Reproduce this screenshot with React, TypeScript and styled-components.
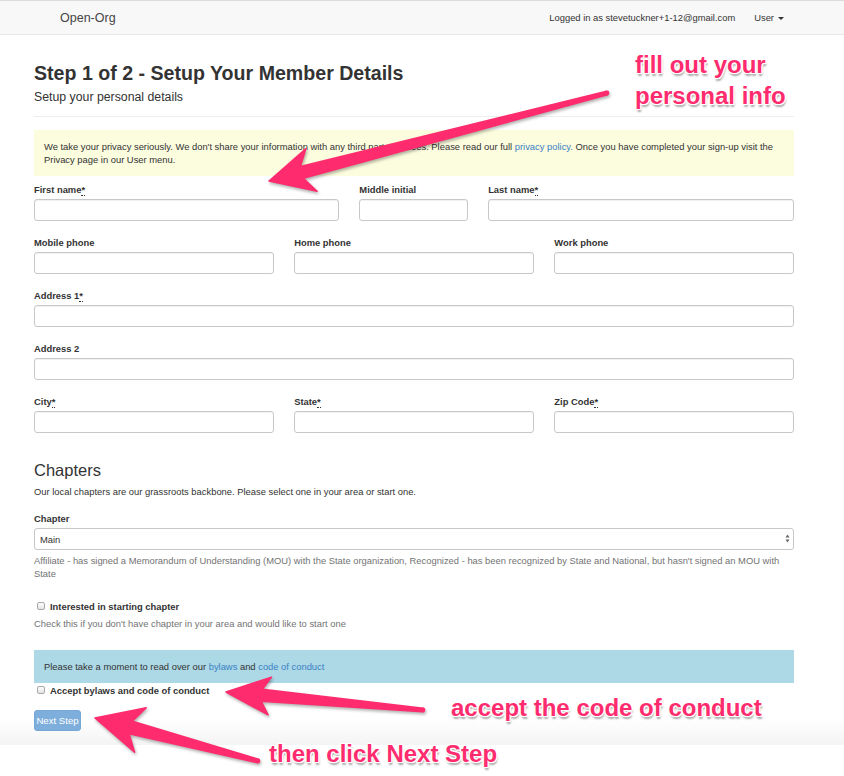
import React from "react";
import styled, { createGlobalStyle } from "styled-components";

const Global = createGlobalStyle`
  html, body { margin: 0; padding: 0; background: #fff; }
  body {
    font-family: "Liberation Sans", Arial, Helvetica, sans-serif;
    color: #333;
    font-size: 9.4px;
  }
  * { box-sizing: border-box; }
`;

const Page = styled.div`
  position: relative;
  width: 844px;
  min-height: 776px;
  overflow: hidden;
`;

const Navbar = styled.nav`
  height: 35px;
  background: #f8f8f8;
  border-top: 1px solid #dcdcdc;
  border-bottom: 1px solid #e7e7e7;
  display: flex;
  align-items: center;
  justify-content: space-between;
  padding: 0 60px;
`;

const Brand = styled.a`
  font-size: 12.5px;
  color: #444;
  text-decoration: none;
`;

const NavRight = styled.div`
  display: flex;
  align-items: center;
  gap: 19px;
  font-size: 9.4px;
  color: #333;
`;

const Caret = styled.span`
  display: inline-block;
  width: 0;
  height: 0;
  border-top: 3px solid #333;
  border-left: 3px solid transparent;
  border-right: 3px solid transparent;
  margin-left: 4px;
  vertical-align: middle;
`;

const Main = styled.main`
  padding: 27px 50px 14px 34px;
  background: linear-gradient(to bottom, #fff calc(100% - 26px), #f4f4f4 100%);
`;

const Title = styled.h1`
  margin: 0;
  font-size: 19.6px;
  line-height: 22px;
  font-weight: 700;
  color: #333;
`;

const Subtitle = styled.div`
  margin-top: 5px;
  font-size: 12.3px;
  line-height: 16px;
`;

const Rule = styled.hr`
  margin: 11px 0 13px;
  border: 0;
  border-top: 1px solid #eee;
  height: 0;
`;

const Alert = styled.div<{ $tone: "warn" | "info"; $gap?: number }>`
  margin-top: ${(p) => p.$gap ?? 0}px;
  padding: 10px;
  line-height: 13px;
  background: ${(p) => (p.$tone === "warn" ? "#fcfcdf" : "#add8e6")};
  color: #333;
`;

const Link = styled.a`
  color: #3a82c4;
  text-decoration: none;
`;

const Row = styled.div<{ $cols: string; $gap?: number }>`
  display: grid;
  grid-template-columns: ${(p) => p.$cols};
  column-gap: 20.5px;
  margin-top: ${(p) => p.$gap ?? 0}px;
  margin-bottom: 14.5px;
`;

const Group = styled.div`
  display: flex;
  flex-direction: column;
`;

const Label = styled.label`
  display: block;
  font-weight: 700;
  line-height: 13px;
  margin-bottom: 3.5px;
  color: #333;
`;

const Req = styled.abbr`
  text-decoration: none;
  border-bottom: 1px dotted #333;
  line-height: 8px;
`;

const TextInput = styled.input`
  height: 22px;
  width: 100%;
  border: 1px solid #c8c8c8;
  border-radius: 3px;
  background: #fff;
  box-shadow: inset 0 1px 1px rgba(0, 0, 0, 0.06);
  padding: 0 5px;
  font: inherit;
`;

const SectionTitle = styled.h3`
  margin: 27px 0 0;
  font-size: 16.5px;
  line-height: 20px;
  font-weight: 400;
  color: #333;
`;

const Para = styled.p<{ $gap: number; $muted?: boolean }>`
  margin: ${(p) => p.$gap}px 0 0;
  line-height: 13px;
  color: ${(p) => (p.$muted ? "#737373" : "#333")};
`;

const ChapterLabel = styled(Label)`
  margin-top: 14px;
`;

const SelectWrap = styled.div`
  position: relative;
  height: 22px;
`;

const Select = styled.select`
  appearance: none;
  -webkit-appearance: none;
  width: 100%;
  height: 22px;
  border: 1px solid #c8c8c8;
  border-radius: 3px;
  background: #fff;
  padding: 0 5px;
  font: inherit;
  color: #333;
`;

const SelectArrows = styled.svg`
  position: absolute;
  right: 4px;
  top: 6px;
  pointer-events: none;
`;

const CheckRow = styled.label<{ $gap: number }>`
  display: flex;
  align-items: center;
  gap: 5px;
  margin-top: ${(p) => p.$gap}px;
  padding-left: 3px;
  line-height: 13px;
  font-weight: 700;
`;

const Box = styled.span`
  width: 8px;
  height: 8px;
  border: 1px solid #a9a9a9;
  border-radius: 2px;
  background: linear-gradient(#fdfdfd, #e4e4e4);
`;

const Button = styled.button`
  margin-top: 13.5px;
  display: block;
  width: 47px;
  height: 21px;
  padding: 0;
  border: 1px solid #76a7d5;
  border-radius: 3px;
  background: #7eaedb;
  color: #fff;
  font: inherit;
  font-size: 9.6px;
`;

const Overlay = styled.svg`
  position: absolute;
  left: 0;
  top: 0;
  pointer-events: none;
  filter: drop-shadow(1px 2px 1.5px rgba(0, 0, 0, 0.3));
`;

const Note = styled.div<{ $top: number; $left: number }>`
  position: absolute;
  top: ${(p) => p.$top}px;
  left: ${(p) => p.$left}px;
  font-family: "Liberation Sans", Arial, Helvetica, sans-serif;
  font-weight: 700;
  font-size: 24px;
  line-height: 31px;
  color: #fe2c6e;
  white-space: nowrap;
  text-shadow: 1px 0 0 #fff, -1px 0 0 #fff, 0 1px 0 #fff, 0 -1px 0 #fff,
    1px 1px 0 #fff, -1px -1px 0 #fff, 1px -1px 0 #fff, -1px 1px 0 #fff,
    1px 2.5px 2px rgba(0, 0, 0, 0.35);
`;

type P = [number, number];

function arrowPoints(
  tail: P,
  tip: P,
  headLen: number,
  headW: number,
  notch: number,
  w1: number,
  w0: number
) {
  const dx = tip[0] - tail[0];
  const dy = tip[1] - tail[1];
  const L = Math.hypot(dx, dy);
  const ux = dx / L;
  const uy = dy / L;
  const nx = -uy;
  const ny = ux;
  const at = (back: number, side: number): P => [
    tip[0] - ux * back + nx * side,
    tip[1] - uy * back + ny * side,
  ];
  const pts: P[] = [
    tip,
    at(headLen, headW),
    at(notch, w1),
    [tail[0] + nx * w0, tail[1] + ny * w0],
    [tail[0] - nx * w0, tail[1] - ny * w0],
    at(notch, -w1),
    at(headLen, -headW),
  ];
  return pts.map((p) => `${p[0].toFixed(1)},${p[1].toFixed(1)}`).join(" ");
}

const arrows = [
  { tail: [607, 93] as P, tip: [269, 181] as P, head: 44, hw: 22, notch: 34, w1: 6, w0: 1.8 },
  { tail: [423, 710] as P, tip: [226, 692] as P, head: 44, hw: 19, notch: 36, w1: 6, w0: 1.8 },
  { tail: [258, 761] as P, tip: [95, 718] as P, head: 47, hw: 23, notch: 37, w1: 6.5, w0: 1.8 },
];

export default function App() {
  return (
    <Page>
      <Global />
      <Navbar>
        <Brand href="#">Open-Org</Brand>
        <NavRight>
          <span>Logged in as stevetuckner+1-12@gmail.com</span>
          <span>
            User<Caret />
          </span>
        </NavRight>
      </Navbar>
      <Main>
        <Title>Step 1 of 2 - Setup Your Member Details</Title>
        <Subtitle>Setup your personal details</Subtitle>
        <Rule />
        <Alert $tone="warn">
          We take your privacy seriously. We don't share your information with any third party services. Please
          read our full <Link href="#">privacy policy.</Link> Once you have completed your sign-up visit the
          <br />
          Privacy page in our User menu.
        </Alert>

        <Row $cols="304fr 108fr 305fr" $gap={6.5}>
          <Group>
            <Label>
              First name<Req title="required">*</Req>
            </Label>
            <TextInput />
          </Group>
          <Group>
            <Label>Middle initial</Label>
            <TextInput />
          </Group>
          <Group>
            <Label>
              Last name<Req title="required">*</Req>
            </Label>
            <TextInput />
          </Group>
        </Row>

        <Row $cols="1fr 1fr 1fr">
          <Group>
            <Label>Mobile phone</Label>
            <TextInput />
          </Group>
          <Group>
            <Label>Home phone</Label>
            <TextInput />
          </Group>
          <Group>
            <Label>Work phone</Label>
            <TextInput />
          </Group>
        </Row>

        <Row $cols="1fr">
          <Group>
            <Label>
              Address 1<Req title="required">*</Req>
            </Label>
            <TextInput />
          </Group>
        </Row>

        <Row $cols="1fr">
          <Group>
            <Label>Address 2</Label>
            <TextInput />
          </Group>
        </Row>

        <Row $cols="1fr 1fr 1fr">
          <Group>
            <Label>
              City<Req title="required">*</Req>
            </Label>
            <TextInput />
          </Group>
          <Group>
            <Label>
              State<Req title="required">*</Req>
            </Label>
            <TextInput />
          </Group>
          <Group>
            <Label>
              Zip Code<Req title="required">*</Req>
            </Label>
            <TextInput />
          </Group>
        </Row>

        <SectionTitle>Chapters</SectionTitle>
        <Para $gap={4.5}>
          Our local chapters are our grassroots backbone. Please select one in your area or start one.
        </Para>

        <ChapterLabel>Chapter</ChapterLabel>
        <SelectWrap>
          <Select defaultValue="main">
            <option value="main">Main</option>
          </Select>
          <SelectArrows width="5" height="9" viewBox="0 0 5 9">
            <path d="M2.5 0.5 L4.5 3.5 L0.5 3.5 Z" fill="#666" />
            <path d="M2.5 8.5 L4.5 5.5 L0.5 5.5 Z" fill="#666" />
          </SelectArrows>
        </SelectWrap>
        <Para $gap={3.5} $muted>
          Affiliate - has signed a Memorandum of Understanding (MOU) with the State organization, Recognized - has
          been recognized by State and National, but hasn't signed an MOU with
          <br />
          State
        </Para>

        <CheckRow $gap={20}>
          <Box />
          Interested in starting chapter
        </CheckRow>
        <Para $gap={4} $muted>
          Check this if you don't have chapter in your area and would like to start one
        </Para>

        <Alert $tone="info" $gap={20.5}>
          Please take a moment to read over our <Link href="#">bylaws</Link> and{" "}
          <Link href="#">code of conduct</Link>
        </Alert>
        <CheckRow $gap={0.5}>
          <Box />
          Accept bylaws and code of conduct
        </CheckRow>
        <Button disabled>Next Step</Button>
      </Main>

      <Overlay width="844" height="776" viewBox="0 0 844 776">
        {arrows.map((a, i) => (
          <g key={i}>
            <polygon
              points={arrowPoints(a.tail, a.tip, a.head, a.hw, a.notch, a.w1, a.w0)}
              fill="#fe2c6e"
              stroke="#fe2c6e"
              strokeWidth="1.5"
              strokeLinejoin="round"
            />
            <circle cx={a.tail[0]} cy={a.tail[1]} r={a.w0 + 0.6} fill="#fe2c6e" />
          </g>
        ))}
      </Overlay>

      <Note $top={49} $left={635}>
        fill out your
        <br />
        personal info
      </Note>
      <Note $top={692} $left={451}>
        accept the code of conduct
      </Note>
      <Note $top={738} $left={269}>
        then click Next Step
      </Note>
    </Page>
  );
}
